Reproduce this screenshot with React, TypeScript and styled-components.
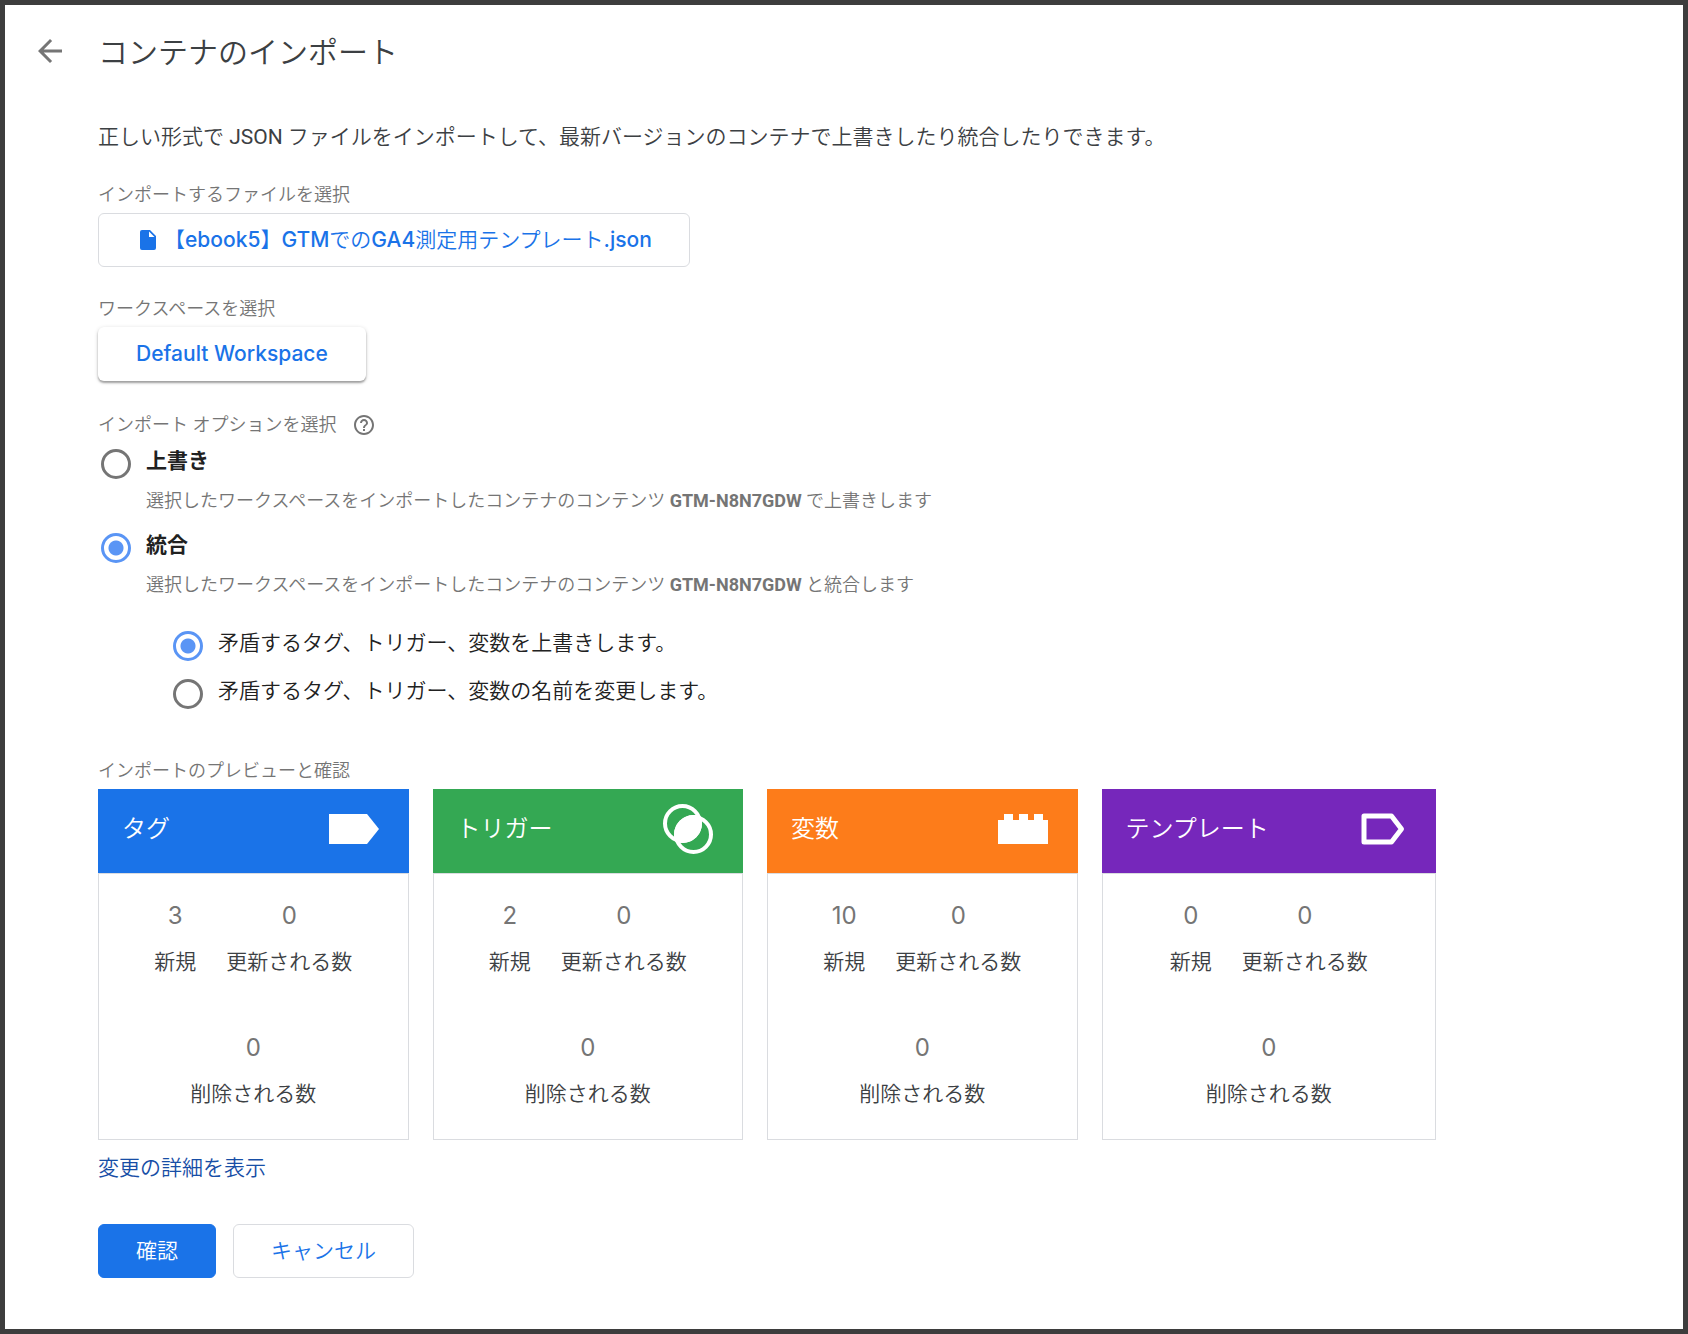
import React, { useState } from "react";
import styled, { createGlobalStyle } from "styled-components";

const bodyFont = `Roboto, "Noto Sans CJK JP", sans-serif`;
const displayFont = `Inter, "Noto Sans CJK JP", sans-serif`;

const GlobalStyle = createGlobalStyle`
  *, *::before, *::after { box-sizing: border-box; }
  body {
    margin: 0;
    background: #fff;
    color: #3c4043;
    font-family: ${bodyFont};
    font-size: 21px;
    font-weight: 350;
  }
`;

const Page = styled.main`
  min-height: 100vh;
  padding: 28px 27px 46px;
  border: 5px solid #3d3d3d;
`;

const Header = styled.header`
  display: flex;
  align-items: flex-start;
  gap: 30px;
`;

const BackButton = styled.button`
  display: flex;
  width: 36px;
  height: 36px;
  padding: 0;
  border: 0;
  background: none;
  color: #757575;
  cursor: pointer;
`;

const Title = styled.h1`
  margin: 0;
  font-size: 30px;
  font-weight: 350;
  line-height: 40px;
`;

const Content = styled.div`
  margin: 48px 0 0 66px;
  max-width: 1338px;
`;

const Intro = styled.p`
  margin: 0;
  line-height: 32px;
`;

const Latin = styled.span`
  font-weight: 400;
`;

const Section = styled.section<{ $gap?: number }>`
  display: flex;
  flex-direction: column;
  align-items: flex-start;
  gap: 4px;
  margin-top: ${(p) => p.$gap ?? 28}px;
`;

const FieldLabel = styled.label`
  display: flex;
  align-items: center;
  gap: 16px;
  color: #757575;
  font-size: 18px;
  line-height: 28px;
`;

const HelpButton = styled.button`
  display: flex;
  padding: 0;
  border: 0;
  background: none;
  color: #757575;
  cursor: pointer;
`;

const Button = styled.button<{ $kind?: "outline" | "raised" | "primary" }>`
  display: inline-flex;
  align-items: center;
  gap: 4px;
  height: 54px;
  padding: 0 37px;
  border: 1px solid
    ${(p) => (p.$kind === "primary" ? "#1a73e8" : p.$kind === "raised" ? "transparent" : "#dadce0")};
  border-radius: 6px;
  background: ${(p) => (p.$kind === "primary" ? "#1a73e8" : "#fff")};
  color: ${(p) => (p.$kind === "primary" ? "#fff" : "#1a73e8")};
  box-shadow: ${(p) =>
    p.$kind === "raised" ? "0 2px 2px rgba(0,0,0,.3), 0 1px 4px rgba(0,0,0,.16)" : "none"};
  font-family: ${displayFont};
  font-size: 21px;
  font-weight: 350;
  line-height: 32px;
  white-space: nowrap;
  cursor: pointer;
`;

const Medium = styled.span`
  font-weight: 500;
`;

const Options = styled.div`
  display: flex;
  flex-direction: column;
  gap: 4px;
  padding-left: 3px;
`;

const Option = styled.div`
  display: flex;
  align-items: flex-start;
  gap: 15px;
`;

const Radio = styled.input`
  appearance: none;
  flex: none;
  width: 30px;
  height: 30px;
  margin: 6px 0 0;
  border: 3px solid #757575;
  border-radius: 50%;
  cursor: pointer;

  &:checked {
    border-color: #5a95f5;
    background: radial-gradient(circle, #5a95f5 7px, transparent 8px);
  }
`;

const OptionLabel = styled.label<{ $strong?: boolean }>`
  display: block;
  color: #212121;
  font-weight: ${(p) => (p.$strong ? 700 : 350)};
  line-height: 36px;
`;

const OptionHint = styled.p`
  margin: 0;
  color: #757575;
  font-size: 18px;
  line-height: 44px;

  strong {
    font-weight: 700;
  }
`;

const SubOptions = styled.div`
  display: flex;
  flex-direction: column;
  gap: 12px;
  padding: 14px 0 0 72px;
`;

const Cards = styled.div`
  display: grid;
  grid-template-columns: repeat(3, minmax(0, 13fr)) minmax(0, 14fr);
  gap: 24px;
  width: 100%;
`;

const CardHead = styled.header<{ $color: string }>`
  display: flex;
  align-items: center;
  justify-content: space-between;
  height: 84px;
  padding: 0 29px 4px 24px;
  background: ${(p) => p.$color};
  color: #fff;
`;

const CardTitle = styled.h2`
  margin: 0;
  font-size: 24px;
  font-weight: 350;
  line-height: 36px;
`;

const Stats = styled.dl`
  display: flex;
  flex-wrap: wrap;
  justify-content: center;
  gap: 40px 30px;
  margin: 0;
  padding: 19px 50px 22px;
  border: 1px solid #dadce0;
`;

const Stat = styled.div`
  display: flex;
  flex-direction: column-reverse;
  align-items: center;
  line-height: 46px;
`;

const StatValue = styled.dd`
  margin: 0;
  color: #757575;
  font-family: ${displayFont};
  font-size: 24px;
  font-weight: 400;
`;

const DetailsLink = styled.a`
  display: inline-block;
  margin-top: 12px;
  color: #174ea6;
  line-height: 32px;
  text-decoration: none;
`;

const Actions = styled.div`
  display: flex;
  gap: 17px;
  margin-top: 40px;
`;

const TagIcon = () => (
  <svg width="52" height="52" viewBox="0 0 52 52" fill="#fff" aria-hidden="true">
    <path d="M1 11h38l12 15-12 15H1z" />
  </svg>
);

const TriggerIcon = () => (
  <svg width="52" height="52" viewBox="0 0 52 52" fill="none" aria-hidden="true">
    <circle cx="20.5" cy="20.5" r="17.5" stroke="#fff" strokeWidth="4" />
    <circle cx="31.5" cy="31.5" r="17.5" stroke="#fff" strokeWidth="4" />
    <path
      d="M38.650 13.350A19.500 19.500 0 0 0 13.350 38.650A19.500 19.500 0 0 0 38.650 13.350z"
      fill="#fff"
    />
  </svg>
);

const VariableIcon = () => (
  <svg width="52" height="52" viewBox="0 0 52 52" fill="#fff" aria-hidden="true">
    <path d="M1 17h6v-6h9v6h6v-6h9v6h6v-6h9v6h5v24H1z" />
  </svg>
);

const TemplateIcon = () => (
  <svg width="52" height="52" viewBox="0 0 52 52" fill="none" aria-hidden="true">
    <path
      d="M9 13H36.500L46.500 26L36.500 39H9z"
      stroke="#fff"
      strokeWidth="5"
      strokeLinejoin="round"
    />
  </svg>
);

const cards = [
  { title: "タグ", color: "#1a73e8", icon: <TagIcon />, created: 3 },
  { title: "トリガー", color: "#34a853", icon: <TriggerIcon />, created: 2 },
  { title: "変数", color: "#fd7c1a", icon: <VariableIcon />, created: 10 },
  { title: "テンプレート", color: "#7627bb", icon: <TemplateIcon />, created: 0 },
];

export default function App() {
  const [mode, setMode] = useState("merge");
  const [conflict, setConflict] = useState("overwrite");

  return (
    <>
      <GlobalStyle />
      <Page>
        <Header>
          <BackButton type="button" aria-label="戻る">
            <svg width="36" height="36" viewBox="0 0 24 24" fill="currentColor" aria-hidden="true">
              <path d="M20 11H7.830l5.590-5.590L12 4l-8 8 8 8 1.410-1.410L7.830 13H20v-2z" />
            </svg>
          </BackButton>
          <Title>コンテナのインポート</Title>
        </Header>

        <Content>
          <Intro>
            正しい形式で <Latin>JSON</Latin> ファイルをインポートして、最新バージョンのコンテナで上書きしたり統合したりできます。
          </Intro>

          <Section>
            <FieldLabel htmlFor="file">インポートするファイルを選択</FieldLabel>
            <Button id="file" type="button">
              <svg width="24" height="24" viewBox="0 0 24 24" fill="currentColor" aria-hidden="true">
                <path d="M6 2a2 2 0 0 0-2 2v16a2 2 0 0 0 2 2h12a2 2 0 0 0 2-2V8l-6-6H6zm7 7V3.500L18.500 9H13z" />
              </svg>
              <span>
                【<Medium>ebook5</Medium>】<Medium>GTM</Medium>での<Medium>GA4</Medium>測定用テンプレート<Medium>.json</Medium>
              </span>
            </Button>
          </Section>

          <Section>
            <FieldLabel htmlFor="workspace">ワークスペースを選択</FieldLabel>
            <Button id="workspace" type="button" $kind="raised">
              <Medium>Default Workspace</Medium>
            </Button>
          </Section>

          <Section $gap={30}>
            <FieldLabel as="div" id="options-label">
              インポート オプションを選択
              <HelpButton type="button" aria-label="ヘルプ">
                <svg width="24" height="24" viewBox="0 0 24 24" fill="currentColor" aria-hidden="true">
                  <path d="M11 18h2v-2h-2v2zm1-16C6.480 2 2 6.480 2 12s4.480 10 10 10 10-4.480 10-10S17.520 2 12 2zm0 18c-4.410 0-8-3.590-8-8s3.590-8 8-8 8 3.590 8 8-3.590 8-8 8zm0-14c-2.210 0-4 1.790-4 4h2c0-1.100.9-2 2-2s2 .9 2 2c0 2-3 1.750-3 5h2c0-2.250 3-2.500 3-5 0-2.210-1.790-4-4-4z" />
                </svg>
              </HelpButton>
            </FieldLabel>
            <Options role="radiogroup" aria-labelledby="options-label">
              <Option>
                <Radio
                  type="radio"
                  id="mode-overwrite"
                  name="mode"
                  checked={mode === "overwrite"}
                  onChange={() => setMode("overwrite")}
                />
                <div>
                  <OptionLabel htmlFor="mode-overwrite" $strong>
                    上書き
                  </OptionLabel>
                  <OptionHint>
                    選択したワークスペースをインポートしたコンテナのコンテンツ <strong>GTM-N8N7GDW</strong> で上書きします
                  </OptionHint>
                </div>
              </Option>
              <Option>
                <Radio
                  type="radio"
                  id="mode-merge"
                  name="mode"
                  checked={mode === "merge"}
                  onChange={() => setMode("merge")}
                />
                <div>
                  <OptionLabel htmlFor="mode-merge" $strong>
                    統合
                  </OptionLabel>
                  <OptionHint>
                    選択したワークスペースをインポートしたコンテナのコンテンツ <strong>GTM-N8N7GDW</strong> と統合します
                  </OptionHint>
                </div>
              </Option>
              <SubOptions role="radiogroup" aria-label="統合">
                <Option>
                  <Radio
                    type="radio"
                    id="conflict-overwrite"
                    name="conflict"
                    checked={conflict === "overwrite"}
                    onChange={() => setConflict("overwrite")}
                  />
                  <OptionLabel htmlFor="conflict-overwrite">
                    矛盾するタグ、トリガー、変数を上書きします。
                  </OptionLabel>
                </Option>
                <Option>
                  <Radio
                    type="radio"
                    id="conflict-rename"
                    name="conflict"
                    checked={conflict === "rename"}
                    onChange={() => setConflict("rename")}
                  />
                  <OptionLabel htmlFor="conflict-rename">
                    矛盾するタグ、トリガー、変数の名前を変更します。
                  </OptionLabel>
                </Option>
              </SubOptions>
            </Options>
          </Section>

          <Section $gap={48}>
            <FieldLabel as="div">インポートのプレビューと確認</FieldLabel>
            <Cards>
              {cards.map((card) => (
                <article key={card.title}>
                  <CardHead $color={card.color}>
                    <CardTitle>{card.title}</CardTitle>
                    {card.icon}
                  </CardHead>
                  <Stats>
                    <Stat>
                      <dt>新規</dt>
                      <StatValue>{card.created}</StatValue>
                    </Stat>
                    <Stat>
                      <dt>更新される数</dt>
                      <StatValue>0</StatValue>
                    </Stat>
                    <Stat>
                      <dt>削除される数</dt>
                      <StatValue>0</StatValue>
                    </Stat>
                  </Stats>
                </article>
              ))}
            </Cards>
          </Section>

          <DetailsLink href="#details">変更の詳細を表示</DetailsLink>

          <Actions>
            <Button type="button" $kind="primary">
              確認
            </Button>
            <Button type="button">キャンセル</Button>
          </Actions>
        </Content>
      </Page>
    </>
  );
}
